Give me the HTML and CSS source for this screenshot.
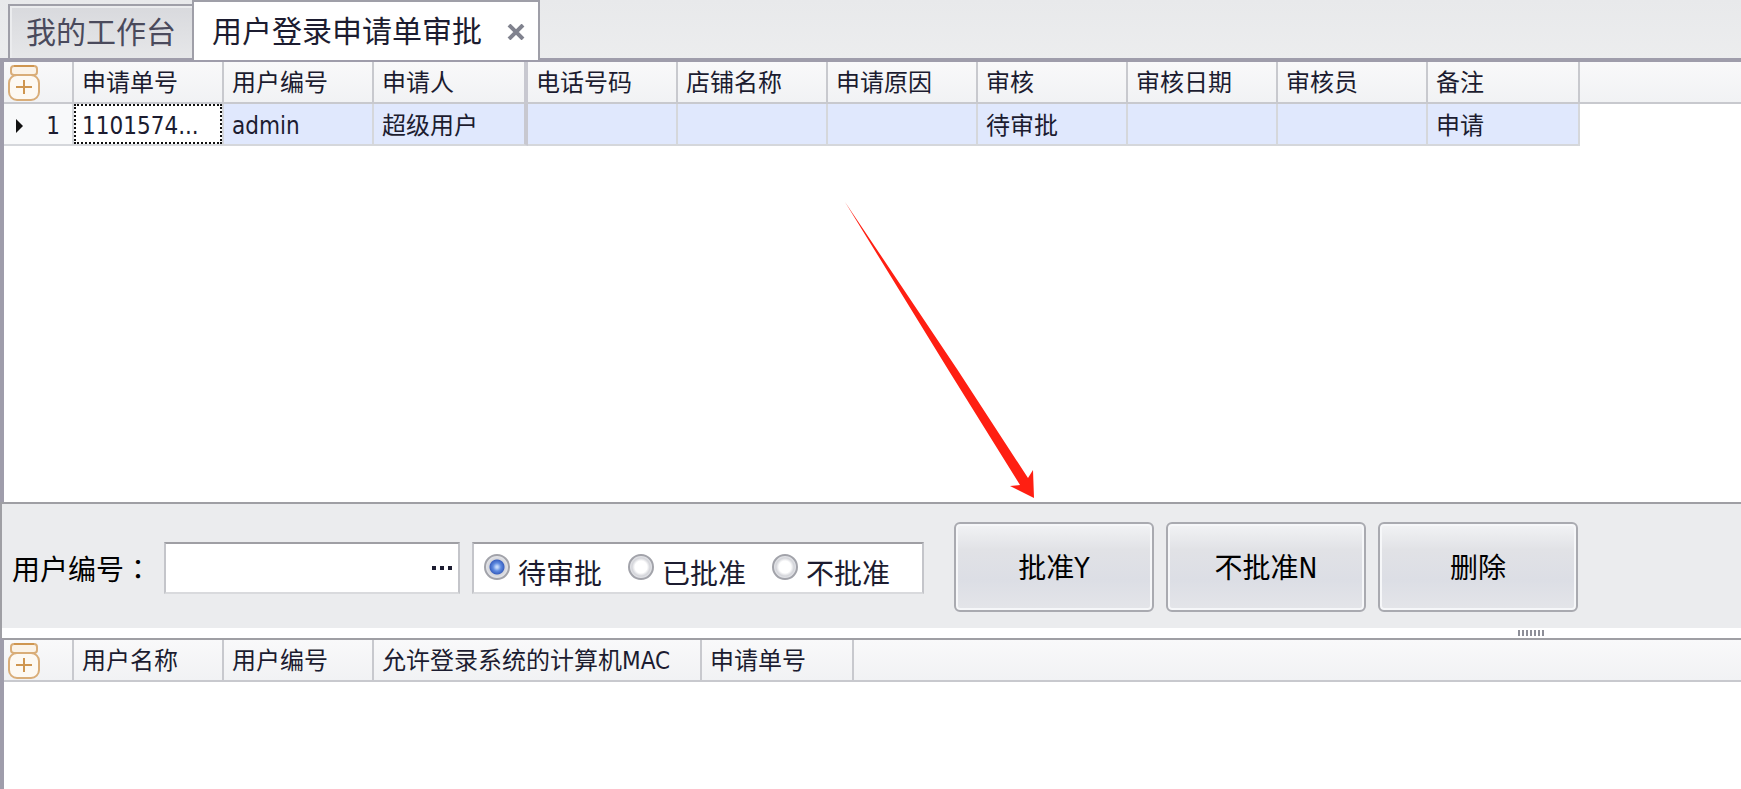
FILE: index.html
```html
<!DOCTYPE html>
<html lang="zh-CN">
<head>
  <meta charset="UTF-8" />
  <title>用户登录申请单审批</title>
  <meta name="viewport" content="width=device-width, initial-scale=1.0" />
  <link rel="stylesheet" href="styles.css">
</head>
<body>
  <svg class="defs" width="0" height="0" aria-hidden="true">
    <symbol id="jar" viewBox="0 0 32 36">
      <g fill="none" stroke="#d9ad78" stroke-width="2">
        <rect x="3" y="1" width="26" height="9" rx="3" fill="#fbf3e8" />
        <path d="M6 1h20" stroke="#cf9650" />
        <rect x="1" y="10" width="30" height="25" rx="8" fill="#fdf9f3" stroke-width="2" />
        <path d="M16 15v14M8 22h16" stroke="#cf9650" />
      </g>
    </symbol>
  </svg>

  <nav class="tabs">
    <button class="tab">我的工作台</button>
    <div class="tab active">
      <span>用户登录申请单审批</span>
      <button class="tab-close" aria-label="关闭">
        <svg width="20" height="16" viewBox="0 0 20 16"><path d="M3 1l14 14M17 1L3 15" stroke="#80828e" stroke-width="4" /></svg>
      </button>
    </div>
  </nav>

  <main class="page">
    <section class="grid requests">
      <table>
        <colgroup>
          <col class="col-mark"><col class="col"><col class="col"><col class="col-fixed"><col class="col"><col class="col"><col class="col"><col class="col"><col class="col"><col class="col"><col class="col-last"><col>
        </colgroup>
        <thead>
          <tr>
            <th class="mark"><svg class="jar"><use href="#jar" /></svg></th>
            <th>申请单号</th>
            <th>用户编号</th>
            <th class="fixed">申请人</th>
            <th>电话号码</th>
            <th>店铺名称</th>
            <th>申请原因</th>
            <th>审核</th>
            <th>审核日期</th>
            <th>审核员</th>
            <th>备注</th>
            <th class="rest"></th>
          </tr>
        </thead>
        <tbody>
          <tr>
            <td class="mark"><span class="row-no"><i class="pointer"></i>1</span></td>
            <td class="focused"><div class="focus-box">1101574...</div></td>
            <td>admin</td>
            <td class="fixed">超级用户</td>
            <td></td>
            <td></td>
            <td></td>
            <td>待审批</td>
            <td></td>
            <td></td>
            <td>申请</td>
            <td class="rest"></td>
          </tr>
        </tbody>
      </table>
    </section>

    <form class="toolbar">
      <label class="caption" for="user-no">用户编号<span class="colon" lang="zh-TW">：</span></label>
      <div class="lookup">
        <input type="text" id="user-no" />
        <button type="button" class="lookup-btn" aria-label="选择用户"><i></i><i></i><i></i></button>
      </div>
      <div class="states">
        <label><input type="radio" name="state" checked />待审批</label>
        <label><input type="radio" name="state" />已批准</label>
        <label><input type="radio" name="state" />不批准</label>
      </div>
      <div class="actions">
        <button type="button">批准Y</button>
        <button type="button">不批准N</button>
        <button type="button">删除</button>
      </div>
    </form>

    <div class="splitter"><span class="grip"></span></div>

    <section class="grid computers">
      <table>
        <colgroup>
          <col class="col-mark"><col class="col"><col class="col"><col class="col-mac"><col class="col-last"><col>
        </colgroup>
        <thead>
          <tr>
            <th class="mark"><svg class="jar"><use href="#jar" /></svg></th>
            <th>用户名称</th>
            <th>用户编号</th>
            <th>允许登录系统的计算机MAC</th>
            <th>申请单号</th>
            <th class="rest"></th>
          </tr>
        </thead>
      </table>
    </section>
  </main>

  <svg class="arrow" width="190" height="298" viewBox="0 0 190 298" aria-hidden="true">
    <path d="M0 0L112 167L183 276L188 268L189 296L165 284L175 283L104 169Z" fill="#ff1f12" />
  </svg>
</body>
</html>
```

FILE: styles.css
```css
* {
  box-sizing: border-box;
}

body {
  margin: 0;
  height: 100vh;
  display: flex;
  flex-direction: column;
  overflow: hidden;
  background: #fff;
  color: #1c1c30;
  font-family: "DejaVu Sans Condensed", "Noto Sans CJK SC", sans-serif;
  font-size: 24px;
  line-height: 32px;
}

button,
input {
  font: inherit;
  color: inherit;
}

.defs {
  position: absolute;
}

/* tabs */
.tabs {
  display: flex;
  align-items: flex-end;
  height: 60px;
  padding-left: 8px;
  background: linear-gradient(#e8e9eb, #ecedee);
  box-shadow: inset 0 -2px #9f9dab;
  font-size: 30px;
}

.tab {
  display: flex;
  align-items: center;
  height: 56px;
  padding: 4px 16px 2px;
  border: 2px solid #9f9fa8;
  border-right: 0;
  border-bottom-color: #9f9dab;
  background: linear-gradient(#d8d9dd, #e6e7e9);
  box-shadow: inset 2px 2px #ebecee;
  color: #4a4a5c;
}

.tab.active {
  height: 60px;
  padding: 2px 12px 0 18px;
  border-right: 2px solid #9f9fa8;
  border-bottom: 0;
  background: #fff;
  box-shadow: none;
  color: #1c1c30;
}

.tab-close {
  display: flex;
  margin-left: 24px;
  padding: 0;
  border: 0;
  background: none;
}

/* grids */
.page {
  flex: 1;
  display: flex;
  flex-direction: column;
}

.grid {
  border-left: 4px solid #9f9dab;
}

.requests {
  height: 442px;
  border-top: 2px solid #9f9dab;
}

.computers {
  flex: 1;
  border-top: 2px solid #9f9fa4;
}

table {
  width: 100%;
  table-layout: fixed;
  border-collapse: separate;
  border-spacing: 0;
}

.col-mark {
  width: 70px;
}

.col {
  width: 150px;
}

.col-last {
  width: 152px;
}

.col-fixed {
  width: 154px;
}

.col-mac {
  width: 328px;
}

th,
td {
  height: 42px;
  padding: 2px 8px 0;
  border-right: 2px solid #c8c9ce;
  border-bottom: 2px solid #c8c9ce;
  text-align: left;
  font-weight: normal;
  white-space: nowrap;
  overflow: hidden;
}

th {
  background: linear-gradient(#f9f9fa, #f1f2f4);
}

td {
  padding-top: 4px;
  border-color: #d5d7db;
  background: #e0e8fd;
}

th.fixed,
td.fixed {
  border-right: 4px solid #c8c8d0;
}

th.rest {
  border-right: 0;
}

td.rest {
  border: 0;
  background: none;
}

th.mark {
  padding: 2px 0 0 4px;
}

td.mark {
  padding: 4px 12px 0;
  background: #f8f9fa;
}

td.focused {
  padding: 0;
  background: #fff;
}

.focus-box {
  height: 40px;
  padding: 4px 6px 0;
  border: 2px dotted #111;
}

.jar {
  display: block;
  width: 32px;
  height: 36px;
}

.row-no {
  display: flex;
  align-items: center;
  justify-content: space-between;
}

.pointer {
  border: 7px solid transparent;
  border-left-color: #111;
  border-right: 0;
}

/* filter bar */
.toolbar {
  display: flex;
  align-items: center;
  height: 126px;
  padding: 2px 8px 0 10px;
  border-left: 2px solid #9f9fa4;
  border-top: 2px solid #9f9fa4;
  background: #ebecee;
  font-size: 28px;
}

.caption {
  width: 152px;
  padding-top: 4px;
  color: #000;
}

.colon {
  font-family: "Noto Sans CJK TC", sans-serif;
}

.lookup,
.states {
  display: flex;
  height: 52px;
  margin-top: 2px;
  border: 2px solid #c4c5ca;
  border-top-color: #9f9fa4;
  border-bottom-color: #d9dadd;
  background: #fff;
}

.lookup {
  width: 296px;
  margin-right: 12px;
}

.lookup input {
  flex: 1;
  min-width: 0;
  border: 0;
  padding: 0 8px;
  background: none;
  outline: none;
}

.lookup-btn {
  display: flex;
  align-items: center;
  gap: 4px;
  padding: 0 6px;
  border: 0;
  background: none;
}

.lookup-btn i {
  width: 4px;
  height: 4px;
  background: #1c1c30;
}

.states {
  width: 452px;
  gap: 26px;
  padding-left: 10px;
}

.states label {
  display: flex;
  align-items: flex-start;
  gap: 8px;
  padding-top: 10px;
  line-height: 42px;
}

.states input {
  appearance: none;
  width: 26px;
  height: 26px;
  margin: 0;
  border: 2px solid #a2a3aa;
  border-radius: 50%;
  background: radial-gradient(circle, #fff 0 6px, #d4d5da 9px, #e4e5e9 11px);
}

.states input:checked {
  background: radial-gradient(circle, #c3d8fa 0 1px, #5f8be0 4px, #3b62c2 7px, #d4d5da 8px, #e4e5e9 11px);
}

.actions {
  display: flex;
  gap: 12px;
  margin-left: 30px;
}

.actions button {
  width: 200px;
  height: 90px;
  padding: 4px 0 0;
  border: 2px solid #a9aab0;
  border-radius: 6px;
  background: linear-gradient(#f2f3f5, #e1e2e6 30%, #dcdee5 65%, #e4e5e9);
  box-shadow: inset 0 0 0 2px #f6f7f9;
  color: #000;
}

.splitter {
  display: flex;
  justify-content: flex-end;
  align-items: center;
  height: 10px;
  padding-right: 197px;
  border-left: 2px solid #9f9fa4;
}

.grip {
  width: 26px;
  height: 6px;
  background: repeating-linear-gradient(to right, #8e8f98 0 2px, transparent 2px 4px);
}

/* pointer to the approve button */
.arrow {
  position: absolute;
  left: 845px;
  top: 202px;
  pointer-events: none;
}
```
